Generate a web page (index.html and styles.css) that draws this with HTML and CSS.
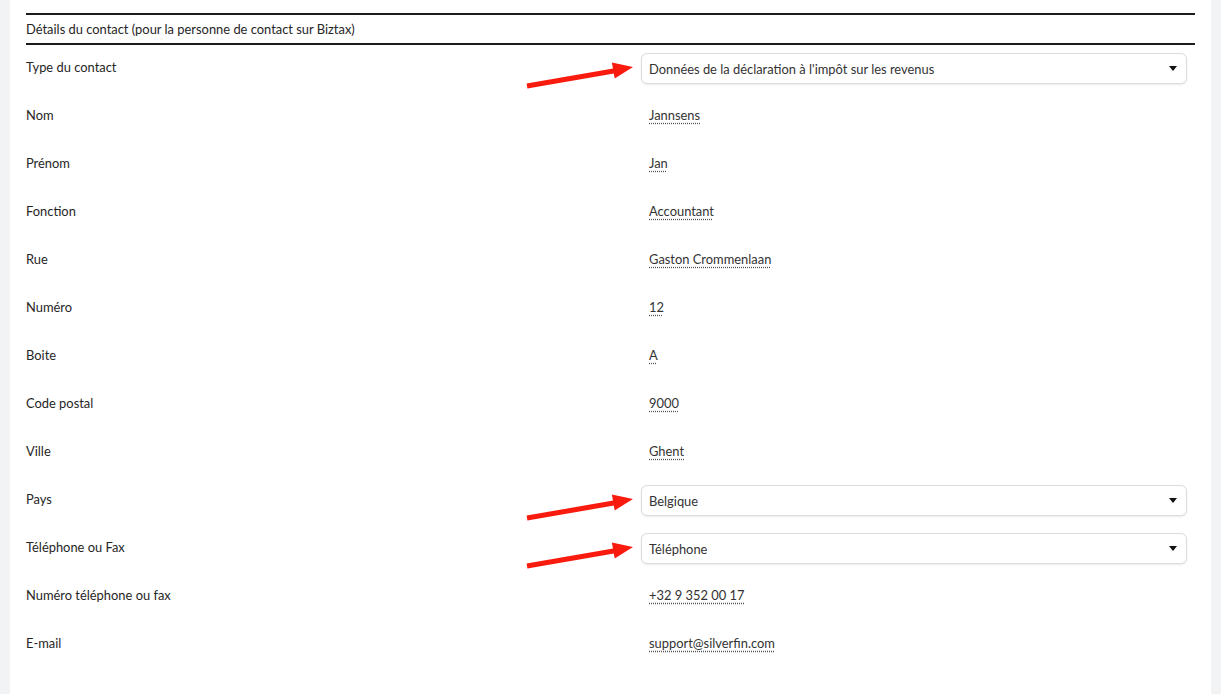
FILE: index.html
```html
<!DOCTYPE html>
<html lang="fr">
<head>
    <meta charset="UTF-8">
    <meta name="viewport" content="width=device-width, initial-scale=1.0">
    <title>Détails du contact</title>
    <link rel="stylesheet" href="styles.css">
</head>
<body>
    <div class="page">
        <div class="section-title">Détails du contact (pour la personne de contact sur Biztax)</div>

        <div class="row">
            <div class="label">Type du contact</div>
            <div class="value">
                <svg class="arrow" viewBox="0 0 110 28" width="110" height="28">
                    <line x1="2" y1="26" x2="90" y2="10.8" />
                    <polygon points="108,7 89.7,18.4 86.9,2.6" />
                </svg>
                <div class="select-wrap">
                    <select>
                        <option>Données de la déclaration à l'impôt sur les revenus</option>
                    </select>
                </div>
            </div>
        </div>

        <div class="row">
            <div class="label">Nom</div>
            <div class="value"><span class="field">Jannsens</span></div>
        </div>

        <div class="row">
            <div class="label">Prénom</div>
            <div class="value"><span class="field">Jan</span></div>
        </div>

        <div class="row">
            <div class="label">Fonction</div>
            <div class="value"><span class="field">Accountant</span></div>
        </div>

        <div class="row">
            <div class="label">Rue</div>
            <div class="value"><span class="field">Gaston Crommenlaan</span></div>
        </div>

        <div class="row">
            <div class="label">Numéro</div>
            <div class="value"><span class="field">12</span></div>
        </div>

        <div class="row">
            <div class="label">Boite</div>
            <div class="value"><span class="field">A</span></div>
        </div>

        <div class="row">
            <div class="label">Code postal</div>
            <div class="value"><span class="field">9000</span></div>
        </div>

        <div class="row">
            <div class="label">Ville</div>
            <div class="value"><span class="field">Ghent</span></div>
        </div>

        <div class="row">
            <div class="label">Pays</div>
            <div class="value">
                <svg class="arrow" viewBox="0 0 110 28" width="110" height="28">
                    <line x1="2" y1="26" x2="90" y2="10.8" />
                    <polygon points="108,7 89.7,18.4 86.9,2.6" />
                </svg>
                <div class="select-wrap">
                    <select>
                        <option>Belgique</option>
                    </select>
                </div>
            </div>
        </div>

        <div class="row">
            <div class="label">Téléphone ou Fax</div>
            <div class="value">
                <svg class="arrow" viewBox="0 0 110 28" width="110" height="28">
                    <line x1="2" y1="26" x2="90" y2="10.8" />
                    <polygon points="108,7 89.7,18.4 86.9,2.6" />
                </svg>
                <div class="select-wrap">
                    <select>
                        <option>Téléphone</option>
                    </select>
                </div>
            </div>
        </div>

        <div class="row">
            <div class="label">Numéro téléphone ou fax</div>
            <div class="value"><span class="field">+32 9 352 00 17</span></div>
        </div>

        <div class="row">
            <div class="label">E-mail</div>
            <div class="value"><span class="field">support@silverfin.com</span></div>
        </div>
    </div>
</body>
</html>
```

FILE: styles.css
```css
:root {
    --page-bg: #f2f3f5;
    --card-bg: #ffffff;
    --text-color: #262626;
    --value-color: #333333;
    --border-color: #dcdcdc;
    --arrow-color: #f81b0e;
}

body {
    font-family: Lato, "Open Sans", Arial, sans-serif;
    font-size: 12.9px;
    line-height: 16px;
    color: var(--text-color);
    background-color: var(--page-bg);
    margin: 0;
}

.page {
    margin: 0 10px;
    padding: 13px 16px 0;
    min-height: 100vh;
    box-sizing: border-box;
    background-color: var(--card-bg);
}

.section-title {
    border-top: 2px solid #1c1c1c;
    border-bottom: 2px solid #1c1c1c;
    padding: 6px 0;
}

.row {
    display: grid;
    grid-template-columns: 615px 1fr;
    align-items: start;
    min-height: 48px;
    box-sizing: border-box;
    padding: 8px 0;
}

.label {
    padding-top: 6px;
}

.value {
    position: relative;
    padding-right: 8px;
}

.field {
    display: inline-block;
    margin: 6px 0 0 8px;
    color: var(--value-color);
    text-decoration: underline dotted #555;
    text-underline-offset: 3px;
}

.select-wrap {
    position: relative;
}

.select-wrap::after {
    content: "";
    position: absolute;
    right: 10px;
    top: 13px;
    border-left: 4px solid transparent;
    border-right: 4px solid transparent;
    border-top: 5px solid #111;
    pointer-events: none;
}

select {
    appearance: none;
    -webkit-appearance: none;
    width: 100%;
    height: 31px;
    padding: 0 28px 0 7px;
    font-family: inherit;
    font-size: 12.9px;
    color: var(--value-color);
    background-color: #fff;
    border: 1px solid var(--border-color);
    border-radius: 6px;
    box-shadow: 0 1px 2px rgba(0, 0, 0, 0.08);
}

.arrow {
    position: absolute;
    left: -116px;
    top: 7px;
    overflow: visible;
}

.arrow line {
    stroke: var(--arrow-color);
    stroke-width: 5;
}

.arrow polygon {
    fill: var(--arrow-color);
}
```
